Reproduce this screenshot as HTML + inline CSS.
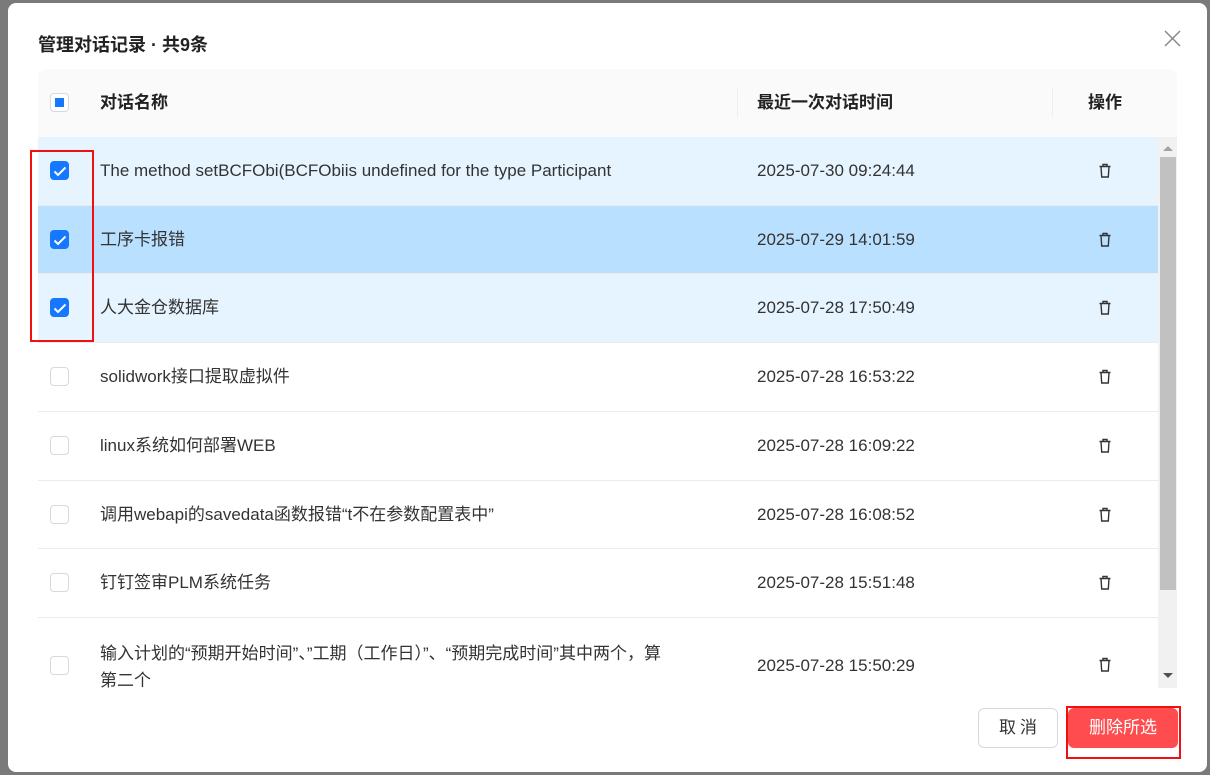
<!DOCTYPE html>
<html><head><meta charset="utf-8"><style>
*{box-sizing:border-box;margin:0;padding:0}
body{width:1210px;height:775px;background:#7a7a7a;position:relative;overflow:hidden;font-family:"Liberation Sans","Noto Sans CJK SC",sans-serif;color:#333}
.dlg{position:absolute;left:8px;top:3px;width:1199px;height:769px;background:#fff;border-radius:8px}
.a{position:absolute}
.title{left:38px;top:32px;font-size:18px;line-height:26px;font-weight:bold;color:#222}
.hdr{left:38px;top:69px;width:1139px;height:68px;background:#fafafa;border-radius:8px 8px 0 0}
.hdr span{position:absolute;top:22px;font-size:17px;line-height:24px;font-weight:bold;color:#222}
.row{position:absolute;left:38px;width:1120px;border-bottom:1px solid #ebebeb}
.row .t{position:absolute;left:62px;font-size:17px;line-height:24px;color:#333}
.row .d{position:absolute;left:719px;font-size:17px;line-height:24px;color:#333}
.cb{position:absolute;left:12px;width:19px;height:19px;border:1px solid #d9d9d9;border-radius:4px;background:#fff}
.cb.on{background:#1677ff;border-color:#1677ff}
.cb.on svg{position:absolute;left:2px;top:3px}
</style></head><body>
<div class="dlg"></div>
<div class="a title">管理对话记录 · 共9条</div>
<svg class="a" style="left:1164px;top:30px" width="17" height="17" viewBox="0 0 17 17"><path d="M1 1L16 16M16 1L1 16" stroke="#888" stroke-width="1.5"/></svg>
<div class="a hdr">
 <div class="cb" style="top:24px"><div style="position:absolute;left:4px;top:4px;width:9px;height:9px;background:#1677ff"></div></div>
 <span style="left:62px">对话名称</span>
 <div style="position:absolute;left:699px;top:20px;width:1px;height:28px;background:#eee"></div>
 <span style="left:719px">最近一次对话时间</span>
 <div style="position:absolute;left:1014px;top:20px;width:1px;height:28px;background:#eee"></div>
 <span style="left:1050px">操作</span>
</div>
<svg width="0" height="0" style="position:absolute"><defs>
<g id="ck"><path d="M1.5 6.5L5 10L12.5 2.5" fill="none" stroke="#fff" stroke-width="2"/></g>
<g id="tr"><path d="M1.5 3.5H12.5M5 3.5V1.5H9V3.5M3 3.5L3.7 14H10.3L11 3.5" fill="none" stroke="#333" stroke-width="1.4"/></g></defs></svg>
<div class="row" style="top:137px;height:69px;background:#e6f4ff"><div class="cb on" style="top:24px"><svg width="14" height="12"><use href="#ck"/></svg></div><div class="t" style="top:22px">The method setBCFObi(BCFObiis undefined for the type Participant</div><div class="d" style="top:22px">2025-07-30 09:24:44</div></div>
<div class="row" style="top:206px;height:68px;background:#bae0ff"><div class="cb on" style="top:24px"><svg width="14" height="12"><use href="#ck"/></svg></div><div class="t" style="top:22px">工序卡报错</div><div class="d" style="top:22px">2025-07-29 14:01:59</div></div>
<div class="row" style="top:274px;height:69px;background:#e6f4ff"><div class="cb on" style="top:24px"><svg width="14" height="12"><use href="#ck"/></svg></div><div class="t" style="top:22px">人大金仓数据库</div><div class="d" style="top:22px">2025-07-28 17:50:49</div></div>
<div class="row" style="top:343px;height:69px"><div class="cb" style="top:24px"></div><div class="t" style="top:22px">solidwork接口提取虚拟件</div><div class="d" style="top:22px">2025-07-28 16:53:22</div></div>
<div class="row" style="top:412px;height:69px"><div class="cb" style="top:24px"></div><div class="t" style="top:22px">linux系统如何部署WEB</div><div class="d" style="top:22px">2025-07-28 16:09:22</div></div>
<div class="row" style="top:481px;height:68px"><div class="cb" style="top:24px"></div><div class="t" style="top:22px">调用webapi的savedata函数报错“t不在参数配置表中”</div><div class="d" style="top:22px">2025-07-28 16:08:52</div></div>
<div class="row" style="top:549px;height:69px"><div class="cb" style="top:24px"></div><div class="t" style="top:22px">钉钉签审PLM系统任务</div><div class="d" style="top:22px">2025-07-28 15:51:48</div></div>
<div class="row" style="top:618px;height:72px;border:none"><div class="cb" style="top:38px"></div><div class="t" style="top:22px;width:610px;line-height:27px">输入计划的“预期开始时间”、”工期（工作日）”、“预期完成时间”其中两个，算<br>第二个</div><div class="d" style="top:36px">2025-07-28 15:50:29</div></div>
<svg class="a" style="left:1098px;top:163px" width="14" height="16"><use href="#tr"/></svg>
<svg class="a" style="left:1098px;top:232px" width="14" height="16"><use href="#tr"/></svg>
<svg class="a" style="left:1098px;top:300px" width="14" height="16"><use href="#tr"/></svg>
<svg class="a" style="left:1098px;top:369px" width="14" height="16"><use href="#tr"/></svg>
<svg class="a" style="left:1098px;top:438px" width="14" height="16"><use href="#tr"/></svg>
<svg class="a" style="left:1098px;top:507px" width="14" height="16"><use href="#tr"/></svg>
<svg class="a" style="left:1098px;top:575px" width="14" height="16"><use href="#tr"/></svg>
<svg class="a" style="left:1098px;top:657px" width="14" height="16"><use href="#tr"/></svg>
<div class="a" style="left:1158px;top:137px;width:19px;height:551px;background:#f1f1f1"></div>
<div class="a" style="left:1160px;top:157px;width:16px;height:433px;background:#c1c1c1"></div>
<div class="a" style="left:1163px;top:146px;width:0;height:0;border-left:5px solid transparent;border-right:5px solid transparent;border-bottom:5px solid #a3a3a3"></div>
<div class="a" style="left:1163px;top:673px;width:0;height:0;border-left:5px solid transparent;border-right:5px solid transparent;border-top:5px solid #505050"></div>
<div class="a" style="left:978px;top:708px;width:80px;height:40px;border:1px solid #d9d9d9;border-radius:6px;font-size:17px;text-align:center;line-height:38px;color:#333;letter-spacing:4px;padding-left:4px">取消</div>
<div class="a" style="left:1068px;top:708px;width:110px;height:40px;background:#ff4d4f;border-radius:6px;font-size:17px;text-align:center;line-height:40px;color:#fff">删除所选</div>
<div class="a" style="left:1066px;top:706px;width:115px;height:53px;border:2px solid #f01010"></div>
<div class="a" style="left:30px;top:150px;width:64px;height:192px;border:2px solid #f01010"></div>
</body></html>
